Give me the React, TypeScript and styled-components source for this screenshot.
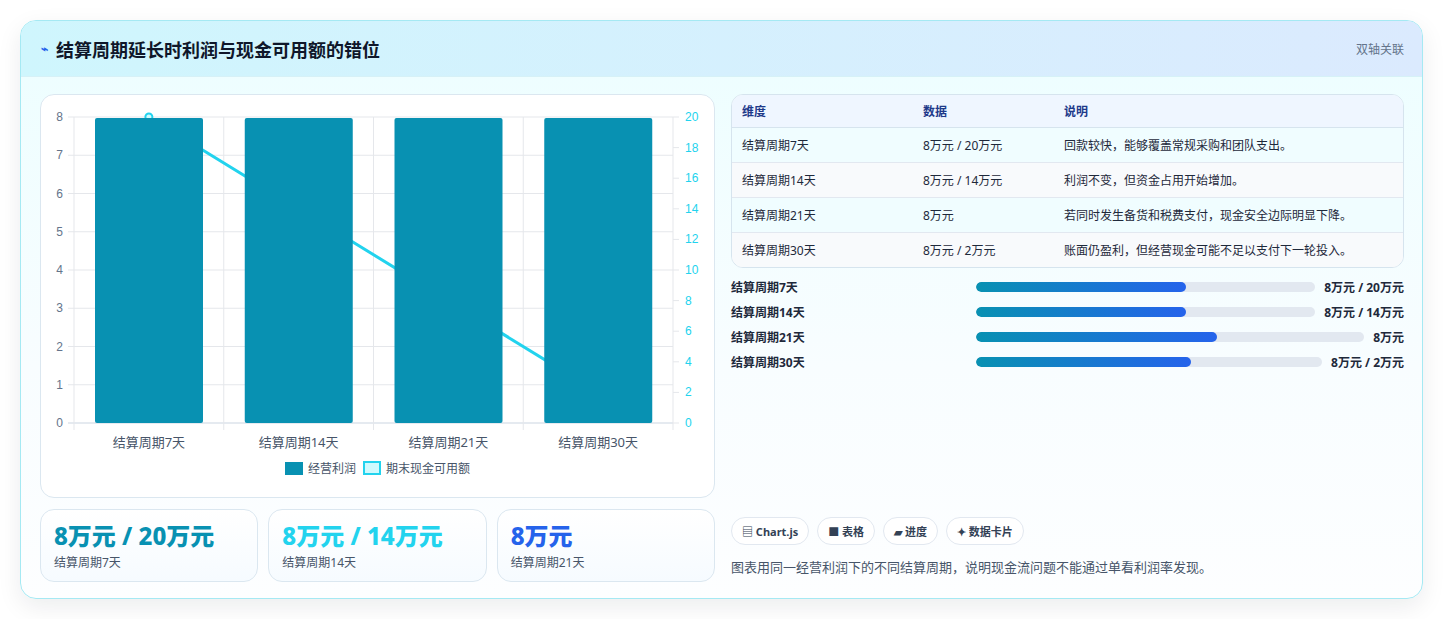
import React from "react";
import styled, { createGlobalStyle } from "styled-components";

const GlobalStyle = createGlobalStyle`
  body {
    margin: 0;
    background: #ffffff;
    font-family: "Noto Sans", "Noto Sans CJK SC", sans-serif;
  }
`;

const periods = ["结算周期7天", "结算周期14天", "结算周期21天", "结算周期30天"];
const cash = [20, 14, 8, 2];

const rows = [
  { dim: "结算周期7天", data: "8万元 / 20万元", note: "回款较快，能够覆盖常规采购和团队支出。" },
  { dim: "结算周期14天", data: "8万元 / 14万元", note: "利润不变，但资金占用开始增加。" },
  { dim: "结算周期21天", data: "8万元", note: "若同时发生备货和税费支付，现金安全边际明显下降。" },
  { dim: "结算周期30天", data: "8万元 / 2万元", note: "账面仍盈利，但经营现金可能不足以支付下一轮投入。" },
];

const progress = [
  { label: "结算周期7天", value: "8万元 / 20万元", pct: 62 },
  { label: "结算周期14天", value: "8万元 / 14万元", pct: 62 },
  { label: "结算周期21天", value: "8万元", pct: 62 },
  { label: "结算周期30天", value: "8万元 / 2万元", pct: 62 },
];

const kpis = [
  { value: "8万元 / 20万元", label: "结算周期7天", color: "#0891b2" },
  { value: "8万元 / 14万元", label: "结算周期14天", color: "#22d3ee" },
  { value: "8万元", label: "结算周期21天", color: "#2563eb" },
];

function Chart() {
  const x0 = 33, x1 = 632, yTop = 22, yBot = 328;
  const cw = (x1 - x0) / 4;
  const yL = (v: number) => yBot - (v / 8) * (yBot - yTop);
  const yR = (v: number) => yBot - (v / 20) * (yBot - yTop);
  const pts = cash.map((c, i) => `${x0 + cw * (i + 0.5)},${yR(c)}`).join(" ");
  return (
    <svg width="674" height="360" style={{ display: "block" }}>
      {Array.from({ length: 9 }, (_, i) => (
        <g key={i}>
          <line x1={x0 - 6} x2={x1} y1={yL(i)} y2={yL(i)} stroke={i === 0 ? "#cbd5e1" : "#e5e7eb"} />
          <text x={22} y={yL(i) + 4} fontSize="12" fill="#64748b" textAnchor="end" fontFamily="Liberation Sans, sans-serif">{i}</text>
        </g>
      ))}
      {Array.from({ length: 11 }, (_, i) => (
        <g key={i}>
          <line x1={x1} x2={x1 + 6} y1={yR(i * 2)} y2={yR(i * 2)} stroke="#e5e7eb" />
          <text x={644} y={yR(i * 2) + 4} fontSize="12" fill="#22d3ee" fontFamily="Liberation Sans, sans-serif">{i * 2}</text>
        </g>
      ))}
      {Array.from({ length: 5 }, (_, i) => (
        <line key={i} x1={x0 + cw * i} x2={x0 + cw * i} y1={yTop} y2={yBot + 7} stroke="#e5e7eb" />
      ))}
      <polyline points={pts} fill="none" stroke="#22d3ee" strokeWidth="3" />
      <circle cx={x0 + cw * 0.5} cy={yR(20)} r="3.5" fill="#cffafe" stroke="#22d3ee" strokeWidth="2" />
      {periods.map((p, i) => (
        <g key={p}>
          <rect x={x0 + cw * i + 21} y={yL(8) + 1} width={108} height={yBot - yL(8) - 1} rx="2" fill="#0891b2" />
          <text x={x0 + cw * (i + 0.5)} y={352} fontSize="13" fill="#475569" textAnchor="middle">{p}</text>
        </g>
      ))}
    </svg>
  );
}

export default function App() {
  return (
    <Page>
      <GlobalStyle />
      <Card>
        <Header>
          <Title>
            <Bolt>⌁</Bolt>结算周期延长时利润与现金可用额的错位
          </Title>
          <Tag>双轴关联</Tag>
        </Header>
        <Body>
          <LeftCol>
            <ChartBox>
              <Chart />
              <Legend>
                <LegendSwatch />经营利润
                <LegendSwatch $outline />期末现金可用额
              </Legend>
            </ChartBox>
            <KpiRow>
              {kpis.map((k) => (
                <Kpi key={k.label}>
                  <KpiValue $color={k.color}>{k.value}</KpiValue>
                  <KpiLabel>{k.label}</KpiLabel>
                </Kpi>
              ))}
            </KpiRow>
          </LeftCol>
          <RightCol>
            <Table>
              <thead>
                <tr>
                  <Th style={{ width: 161 }}>维度</Th>
                  <Th style={{ width: 121 }}>数据</Th>
                  <Th>说明</Th>
                </tr>
              </thead>
              <tbody>
                {rows.map((r, i) => (
                  <Tr key={r.dim} $alt={i % 2 === 1}>
                    <Td>{r.dim}</Td>
                    <Td>{r.data}</Td>
                    <Td>{r.note}</Td>
                  </Tr>
                ))}
              </tbody>
            </Table>
            <Bars>
              {progress.map((p) => (
                <BarRow key={p.label}>
                  <BarLabel>{p.label}</BarLabel>
                  <Track>
                    <Fill style={{ width: `${p.pct}%` }} />
                  </Track>
                  <BarValue>{p.value}</BarValue>
                </BarRow>
              ))}
            </Bars>
            <Spacer />
            <Chips>
              <Chip>▤ Chart.js</Chip>
              <Chip>■ 表格</Chip>
              <Chip>▰ 进度</Chip>
              <Chip>✦ 数据卡片</Chip>
            </Chips>
            <Note>图表用同一经营利润下的不同结算周期，说明现金流问题不能通过单看利润率发现。</Note>
          </RightCol>
        </Body>
      </Card>
    </Page>
  );
}

const Page = styled.div`
  padding: 20px 21px 20px 20px;
`;

const Card = styled.div`
  width: 1403px;
  height: 579px;
  box-sizing: border-box;
  border: 1px solid #a5e9f3;
  border-radius: 16px;
  overflow: hidden;
  background: linear-gradient(180deg, #ecfeff 0%, #f8fdff 60%, #fdfeff 100%);
  box-shadow: 0 8px 24px rgba(15, 23, 42, 0.08);
  display: flex;
  flex-direction: column;
`;

const Header = styled.div`
  height: 55px;
  flex-shrink: 0;
  display: flex;
  align-items: center;
  justify-content: space-between;
  padding: 0 18px 0 20px;
  background: linear-gradient(90deg, #cff6fd 0%, #dbeafe 100%);
  border-bottom: 1px solid #d6f1f7;
`;

const Title = styled.h1`
  margin: 0;
  font-size: 18px;
  font-weight: 700;
  color: #0f172a;
  display: flex;
  align-items: center;
  gap: 8px;
`;

const Bolt = styled.span`
  font-size: 12px;
  color: #2563eb;
`;

const Tag = styled.span`
  font-size: 12px;
  color: #64748b;
`;

const Body = styled.div`
  flex: 1;
  display: flex;
  gap: 16px;
  padding: 17px 18px 18px 19px;
`;

const LeftCol = styled.div`
  width: 675px;
  display: flex;
  flex-direction: column;
  gap: 11px;
`;

const ChartBox = styled.div`
  height: 404px;
  box-sizing: border-box;
  background: #ffffff;
  border: 1px solid #dbe7f0;
  border-radius: 14px;
  padding-top: 0;
  overflow: hidden;
`;

const Legend = styled.div`
  display: flex;
  justify-content: center;
  align-items: center;
  gap: 5px;
  font-size: 12px;
  color: #475569;
  margin-top: 4px;
`;

const LegendSwatch = styled.span<{ $outline?: boolean }>`
  width: ${(p) => (p.$outline ? "14px" : "18px")};
  height: ${(p) => (p.$outline ? "10px" : "13px")};
  background: ${(p) => (p.$outline ? "#cffafe" : "#0891b2")};
  border: ${(p) => (p.$outline ? "2px solid #22d3ee" : "none")};
  margin-left: ${(p) => (p.$outline ? "2px" : "0")};
`;

const KpiRow = styled.div`
  display: flex;
  gap: 10px;
`;

const Kpi = styled.div`
  width: 219px;
  height: 73px;
  box-sizing: border-box;
  padding: 11px 13px;
  border: 1px solid #dbe7f0;
  border-radius: 14px;
  background: linear-gradient(180deg, #ffffff 0%, #f6fbff 100%);
`;

const KpiValue = styled.div<{ $color: string }>`
  font-size: 24px;
  font-weight: 800;
  line-height: 30px;
  color: ${(p) => p.$color};
`;

const KpiLabel = styled.div`
  font-size: 12px;
  color: #475569;
  margin-top: 2px;
`;

const RightCol = styled.div`
  flex: 1;
  display: flex;
  flex-direction: column;
`;

const Table = styled.table`
  width: 100%;
  border-collapse: separate;
  border-spacing: 0;
  border: 1px solid #d6e4ee;
  border-radius: 12px;
  overflow: hidden;
  font-size: 12px;
  background: #ffffff;
`;

const Th = styled.th`
  text-align: left;
  font-weight: 700;
  color: #1e3a8a;
  height: 32px;
  padding: 0 10px;
  background: #eff6ff;
  border-bottom: 1px solid #d6e4ee;
`;

const Tr = styled.tr<{ $alt: boolean }>`
  background: ${(p) => (p.$alt ? "#f8fafc" : "#f0fdff")};
`;

const Td = styled.td`
  height: 34px;
  padding: 0 10px;
  color: #1e293b;
  border-top: 1px solid #e2e8f0;
  tr:first-child > & {
    border-top: none;
  }
`;

const Bars = styled.div`
  display: flex;
  flex-direction: column;
  gap: 7px;
  margin-top: 10px;
`;

const BarRow = styled.div`
  display: flex;
  align-items: center;
  gap: 9px;
  height: 18px;
`;

const BarLabel = styled.span`
  width: 236px;
  font-size: 12px;
  font-weight: 700;
  color: #1e293b;
`;

const Track = styled.div`
  flex: 1;
  height: 10px;
  border-radius: 5px;
  background: #e2e8f0;
  overflow: hidden;
`;

const Fill = styled.div`
  height: 100%;
  border-radius: 5px;
  background: linear-gradient(90deg, #0891b2 0%, #2563eb 100%);
`;

const BarValue = styled.span`
  font-size: 12px;
  font-weight: 700;
  color: #1e293b;
  white-space: nowrap;
`;

const Spacer = styled.div`
  flex: 1;
`;

const Chips = styled.div`
  display: flex;
  gap: 8px;
`;

const Chip = styled.span`
  height: 28px;
  box-sizing: border-box;
  padding: 0 10px;
  display: inline-flex;
  align-items: center;
  border: 1px solid #e2e8f0;
  border-radius: 14px;
  background: #ffffff;
  font-size: 11px;
  font-weight: 700;
  color: #334155;
`;

const Note = styled.p`
  margin: 12px 0 6px;
  font-size: 13px;
  color: #475569;
`;
